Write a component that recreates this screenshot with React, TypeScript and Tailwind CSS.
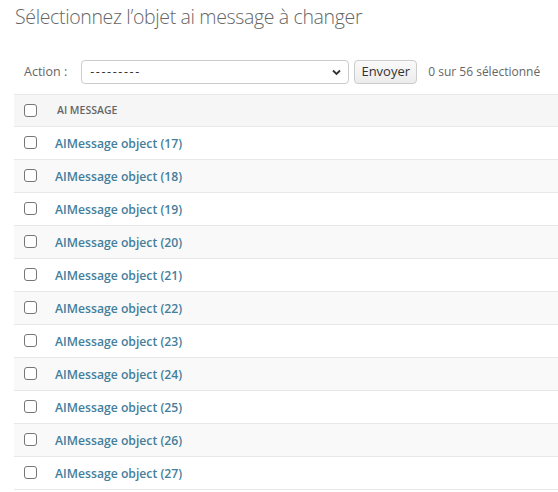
import { useState } from 'react'

const ids = [17, 18, 19, 20, 21, 22, 23, 24, 25, 26, 27]

function Box({ checked, onChange }: any) {
  return (
    <input
      type="checkbox"
      checked={checked}
      onChange={onChange}
      className="m-0 block h-[13px] w-[13px] appearance-none rounded-[3px] border border-[#767676] bg-white checked:bg-[#0075ff] checked:border-[#0075ff]"
    />
  )
}

export default function App() {
  const [sel, setSel] = useState<number[]>([])
  const allOn = sel.length === ids.length

  function toggle(id: number) {
    setSel(s => (s.includes(id) ? s.filter(x => x !== id) : [...s, id]))
  }

  return (
    <div className="min-h-[492px] bg-white pl-[14px] text-[13px] text-[#333]" style={{ fontFamily: '"Open Sans", "Noto Sans", sans-serif' }}>
      <h1 className="pt-[3px] pl-px text-[19.5px] leading-[28px] font-light text-[#666] tracking-[-0.35px]">
        Sélectionnez l’objet ai message à changer
      </h1>

      <div className="mt-[29px] flex h-[24px] items-center">
        <span className="ml-[10px] text-[#666] text-[12.5px]">Action :</span>
        <div className="relative ml-[14px] h-[24px] w-[268px] rounded-[4px] border border-[#ccc] bg-white">
          <span className="absolute left-[8px] top-[2px] text-[12.5px] tracking-[1.6px] text-[#333]">---------</span>
          <svg className="absolute right-[7px] top-[8px]" width="9" height="7" viewBox="0 0 9 7">
            <path d="M1 1.5 L4.5 5 L8 1.5" fill="none" stroke="#333" strokeWidth="1.8" />
          </svg>
        </div>
        <button className="ml-[5px] h-[24px] w-[63px] rounded-[4px] border border-[#ccc] bg-gradient-to-b from-[#fafafa] to-[#ececec] text-[13px] text-[#333]">
          Envoyer
        </button>
        <span className="ml-[11px] text-[12px] text-[#666]">{sel.length} sur 56 sélectionné</span>
      </div>

      <div className="mt-[10px]">
        <div className="flex h-[33px] items-center border-y border-[#e8e8e8] bg-[#f6f6f6]">
          <div className="w-[41px] pl-[10px] pb-[1px]">
            <Box checked={allOn} onChange={() => setSel(allOn ? [] : [...ids])} />
          </div>
          <span className="ml-[2px] pt-px text-[10.5px] font-semibold uppercase text-[#666]">AI message</span>
        </div>
        {ids.map((id, i) => (
          <div
            key={id}
            className={'flex h-[33px] items-center border-b border-[#e8e8e8] ' + (i % 2 === 1 ? 'bg-[#f9f9f9]' : 'bg-white')}
          >
            <div className="w-[41px] pl-[10px] pb-[2px]">
              <Box checked={sel.includes(id)} onChange={() => toggle(id)} />
            </div>
            <a href="#" className="pt-[3px] font-semibold text-[12.2px] text-[#447e9b]">
              AIMessage object ({id})
            </a>
          </div>
        ))}
      </div>
    </div>
  )
}
